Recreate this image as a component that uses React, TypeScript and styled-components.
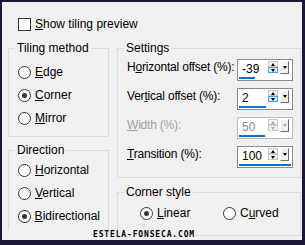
import styled, { createGlobalStyle } from 'styled-components';

const GlobalStyle = createGlobalStyle`
  html, body {
    margin: 0;
    padding: 0;
    background: #f0f0f0;
  }
  body {
    font-family: "Liberation Sans", Arial, sans-serif;
    font-size: 12px;
    color: #000;
  }
`;

const Dialog = styled.div`
  position: relative;
  width: 305px;
  height: 245px;
  box-sizing: border-box;
  border-style: solid;
  border-color: #1e1733;
  border-width: 2px 3px 5px 2px;
  background: #f0f0f0;
  padding: 14px 0 0 6px;
  overflow: hidden;
  display: flex;
  flex-direction: column;
`;

const CheckRow = styled.label`
  display: flex;
  align-items: center;
  gap: 4px;
  height: 14px;
  margin: 1px 0 10px 10px;
`;

const CheckBox = styled.span`
  width: 13px;
  height: 13px;
  box-sizing: border-box;
  border: 1px solid #333;
  background: #fff;
`;

const Columns = styled.div`
  display: flex;
  gap: 8px;
`;

const Column = styled.div<{ $width: number; $gap: number }>`
  width: ${({ $width }) => $width}px;
  display: flex;
  flex-direction: column;
  gap: ${({ $gap }) => $gap}px;
`;

const Group = styled.fieldset`
  margin: 0;
  min-width: 0;
  border: 1px solid #dcdcdc;
  padding: 0;
`;

const Legend = styled.legend`
  margin-left: 6px;
  padding: 0 2px;
  line-height: 14px;
  height: 14px;
`;

const GroupBody = styled.div<{ $pad: string }>`
  padding: ${({ $pad }) => $pad};
`;

const RadioList = styled.div<{ $row?: boolean }>`
  display: flex;
  flex-direction: ${({ $row }) => ($row ? 'row' : 'column')};
  gap: 1px;
`;

const RadioItem = styled.div<{ $width?: number }>`
  display: flex;
  align-items: center;
  gap: 4px;
  height: 22px;
  width: ${({ $width }) => ($width ? `${$width}px` : 'auto')};
`;

const RadioCircle = styled.span<{ $checked?: boolean }>`
  width: 13px;
  height: 13px;
  box-sizing: border-box;
  border: 1px solid #333;
  border-radius: 50%;
  background: #fff;
  display: flex;
  align-items: center;
  justify-content: center;

  &::after {
    content: '';
    width: 5px;
    height: 5px;
    border-radius: 50%;
    background: ${({ $checked }) => ($checked ? '#333' : 'transparent')};
  }
`;

const SettingRows = styled.div`
  display: flex;
  flex-direction: column;
  gap: 6px;
`;

const SettingRow = styled.div`
  display: flex;
  justify-content: space-between;
  align-items: flex-start;
  height: 23px;
`;

const SettingLabel = styled.span<{ $disabled?: boolean }>`
  padding-top: 3px;
  line-height: 14px;
  white-space: nowrap;
  letter-spacing: -0.2px;
  color: ${({ $disabled }) => ($disabled ? '#a0a0a0' : '#000')};
`;

const Spin = styled.div<{ $disabled?: boolean }>`
  width: 56px;
  height: 22px;
  margin-top: 2px;
  box-sizing: border-box;
  border: 1px solid ${({ $disabled }) => ($disabled ? '#bcbcbc' : '#8a8a8a')};
  background: #fff;
  display: flex;
  flex-direction: column;
`;

const SpinTop = styled.div`
  flex: 1;
  display: flex;
  align-items: flex-start;
  padding: 1px 3px 0 0;
`;

const SpinValue = styled.span<{ $disabled?: boolean }>`
  flex: 1;
  padding-left: 4px;
  line-height: 16px;
  color: ${({ $disabled }) => ($disabled ? '#8c8c8c' : '#000')};
`;

const UpDown = styled.div<{ $hot?: boolean; $disabled?: boolean }>`
  width: 10px;
  height: 12px;
  margin-right: 2px;
  display: flex;
  flex-direction: column;
  color: ${({ $disabled }) => ($disabled ? '#a8a8a8' : '#000')};

  & > span {
    flex: 1;
    display: flex;
    align-items: center;
    justify-content: center;
    box-sizing: border-box;
    border: 1px solid #c8c8c8;
    background: #f4f4f4;
  }
  & > span + span {
    border-color: ${({ $hot }) => ($hot ? '#4aa0e6' : '#c8c8c8')};
    background: ${({ $hot }) => ($hot ? '#dcecfc' : '#f4f4f4')};
  }
`;

const Arrow = styled.i<{ $up?: boolean }>`
  width: 0;
  height: 0;
  border-left: 2.5px solid transparent;
  border-right: 2.5px solid transparent;
  ${({ $up }) =>
    $up ? 'border-bottom: 3px solid currentColor;' : 'border-top: 3px solid currentColor;'}
`;

const DropButton = styled.div<{ $disabled?: boolean }>`
  width: 9px;
  height: 13px;
  box-sizing: border-box;
  border-style: solid;
  border-width: 1px;
  border-color: #fff #6b6b6b #6b6b6b #fff;
  background: #f0f0f0;
  display: flex;
  align-items: center;
  justify-content: center;
  color: ${({ $disabled }) => ($disabled ? '#a8a8a8' : '#000')};
`;

const Track = styled.div`
  height: 3px;
  margin: 0 1px 1px;
`;

const Fill = styled.div`
  height: 100%;
  background: #0c72d0;
`;

const Watermark = styled.div`
  position: absolute;
  left: 0;
  bottom: 0;
  width: 193px;
  height: 11px;
  box-sizing: border-box;
  padding: 2px 0 0 91px;
  background: #f0f0f0;
  font-family: "DejaVu Sans Mono", monospace;
  font-weight: bold;
  font-size: 8px;
  line-height: 8px;
  letter-spacing: 0.85px;
  white-space: nowrap;
`;

type Setting = {
  label: React.ReactNode;
  value: string;
  pct: number;
  hot?: boolean;
  disabled?: boolean;
};

const settings: Setting[] = [
  { label: <>H<u>o</u>rizontal offset (%):</>, value: '-39', pct: 30, hot: true },
  { label: <>Ver<u>t</u>ical offset (%):</>, value: '2', pct: 51, hot: true },
  { label: <><u>W</u>idth (%):</>, value: '50', pct: 50, disabled: true },
  { label: <><u>T</u>ransition (%):</>, value: '100', pct: 100 },
];

const Radio = ({ checked, children, width }: { checked?: boolean; children: React.ReactNode; width?: number }) => (
  <RadioItem $width={width}>
    <RadioCircle $checked={checked} />
    <span>{children}</span>
  </RadioItem>
);

export default function App() {
  return (
    <>
      <GlobalStyle />
      <Dialog>
        <CheckRow>
          <CheckBox />
          <span>
            <u>S</u>how tiling preview
          </span>
        </CheckRow>

        <Columns>
          <Column $width={101} $gap={6}>
            <Group>
              <Legend>Tiling method</Legend>
              <GroupBody $pad="6px 8px 7px 9px">
                <RadioList>
                  <Radio><u>E</u>dge</Radio>
                  <Radio checked><u>C</u>orner</Radio>
                  <Radio><u>M</u>irror</Radio>
                </RadioList>
              </GroupBody>
            </Group>
            <Group>
              <Legend>Direction</Legend>
              <GroupBody $pad="2px 8px 7px 9px">
                <RadioList>
                  <Radio><u>H</u>orizontal</Radio>
                  <Radio><u>V</u>ertical</Radio>
                  <Radio checked><u>B</u>idirectional</Radio>
                </RadioList>
              </GroupBody>
            </Group>
          </Column>

          <Column $width={184} $gap={7}>
            <Group>
              <Legend>Settings</Legend>
              <GroupBody $pad="2px 7px 10px 9px">
                <SettingRows>
                  {settings.map((s) => (
                    <SettingRow key={s.value}>
                      <SettingLabel $disabled={s.disabled}>{s.label}</SettingLabel>
                      <Spin $disabled={s.disabled}>
                        <SpinTop>
                          <SpinValue $disabled={s.disabled}>{s.value}</SpinValue>
                          <UpDown $hot={s.hot} $disabled={s.disabled}>
                            <span><Arrow $up /></span>
                            <span><Arrow /></span>
                          </UpDown>
                          <DropButton $disabled={s.disabled}>
                            <Arrow />
                          </DropButton>
                        </SpinTop>
                        <Track>
                          <Fill style={{ width: `${s.pct}%` }} />
                        </Track>
                      </Spin>
                    </SettingRow>
                  ))}
                </SettingRows>
              </GroupBody>
            </Group>
            <Group>
              <Legend>Corner style</Legend>
              <GroupBody $pad="3px 8px 11px 22px">
                <RadioList $row>
                  <Radio checked width={82}><u>L</u>inear</Radio>
                  <Radio>C<u>u</u>rved</Radio>
                </RadioList>
              </GroupBody>
            </Group>
          </Column>
        </Columns>

        <Watermark>ESTELA-FONSECA.COM</Watermark>
      </Dialog>
    </>
  );
}
